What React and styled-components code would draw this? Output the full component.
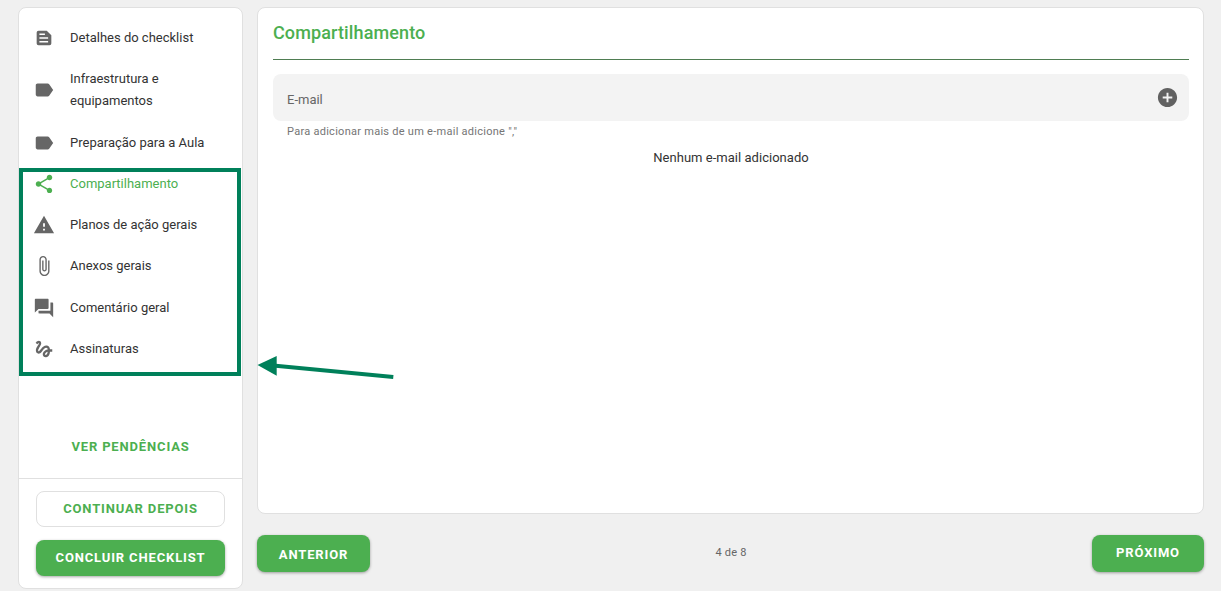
import React from 'react';
import styled, { createGlobalStyle } from 'styled-components';

const GREEN = '#4caf50';
const MARK = '#00805a';

const paths = {
    description: 'M6 4h9l5 5v9a2 2 0 0 1-2 2H6a2 2 0 0 1-2-2V6a2 2 0 0 1 2-2zM7 7.2v1.6h6V7.2zM7 11.2v1.6h9.5v-1.6zM7 15.2v1.6h9.5v-1.6z',
    label: 'M17.63 5.84C17.27 5.33 16.67 5 16 5L5 5.01C3.9 5.01 3 5.9 3 7v10c0 1.1.9 1.99 2 1.99L16 19c.67 0 1.27-.33 1.63-.84L22 12l-4.37-6.16z',
    share: 'M18 16.08c-.76 0-1.44.3-1.96.77L8.91 12.7c.05-.23.09-.46.09-.7s-.04-.47-.09-.7l7.05-4.11c.54.5 1.25.81 2.04.81 1.66 0 3-1.34 3-3s-1.34-3-3-3-3 1.34-3 3c0 .24.04.47.09.7L8.04 9.81C7.5 9.31 6.79 9 6 9c-1.66 0-3 1.34-3 3s1.34 3 3 3c.79 0 1.5-.31 2.04-.81l7.12 4.16c-.05.21-.08.43-.08.65 0 1.61 1.31 2.92 2.92 2.92s2.92-1.31 2.92-2.92-1.31-2.92-2.92-2.92z',
    warning: 'M1 21h22L12 2 1 21zm12-3h-2v-2h2v2zm0-4h-2v-4h2v4z',
    attach: 'M16.5 6v11.5c0 2.21-1.79 4-4 4s-4-1.79-4-4V5c0-1.38 1.12-2.5 2.5-2.5s2.5 1.12 2.5 2.5v10.5c0 .55-.45 1-1 1s-1-.45-1-1V6H10v9.5c0 1.38 1.12 2.5 2.5 2.5s2.5-1.12 2.5-2.5V5c0-2.21-1.79-4-4-4S7 2.79 7 5v12.5c0 3.04 2.46 5.5 5.5 5.5s5.5-2.46 5.5-5.5V6h-1.5z',
    forum: 'M21 6h-2v9H6v2c0 .55.45 1 1 1h11l4 4V7c0-.55-.45-1-1-1zm-4 6V3c0-.55-.45-1-1-1H3c-.55 0-1 .45-1 1v14l4-4h10c.55 0 1-.45 1-1z',
    gesture: 'M4.59 6.89c.7-.71 1.4-1.35 1.71-1.22.5.2 0 1.03-.3 1.52-.25.42-2.86 3.89-2.86 6.31 0 1.28.48 2.34 1.34 2.98.75.56 1.74.73 2.64.46 1.07-.31 1.95-1.4 3.06-2.77 1.21-1.49 2.83-3.44 4.08-3.44 1.63 0 1.65 1.01 1.76 1.79-3.78.64-5.38 3.67-5.38 5.37 0 1.7 1.44 3.09 3.21 3.09 1.63 0 4.29-1.33 4.69-6.1H21v-2.5h-2.47c-.15-1.65-1.09-4.2-4.03-4.2-2.25 0-4.18 1.91-4.94 2.84-.58.73-2.06 2.48-2.29 2.72-.25.3-.68.84-1.11.84-.45 0-.72-.83-.36-1.92.35-1.09 1.4-2.86 1.85-3.52.78-1.14 1.3-1.92 1.3-3.28C8.95 3.69 7.31 3 6.44 3 5.12 3 3.97 4 3.72 4.25c-.36.36-.66.66-.88.93l1.75 1.71zm9.29 11.66c-.31 0-.74-.26-.74-.72 0-.6.73-2.2 2.87-2.76-.3 2.69-1.43 3.48-2.13 3.48z',
    add: 'M12 2C6.48 2 2 6.48 2 12s4.48 10 10 10 10-4.48 10-10S17.52 2 12 2zm5 11h-4v4h-2v-4H7v-2h4V7h2v4h4v2z',
};

const steps = [
    { icon: 'description', text: 'Detalhes do checklist', size: 24 },
    { icon: 'label', text: 'Infraestrutura e equipamentos' },
    { icon: 'label', text: 'Preparação para a Aula' },
    { icon: 'share', text: 'Compartilhamento', active: true },
    { icon: 'warning', text: 'Planos de ação gerais' },
    { icon: 'attach', text: 'Anexos gerais' },
    { icon: 'forum', text: 'Comentário geral' },
    { icon: 'gesture', text: 'Assinaturas' },
];

function Icon({ name, size = 22, className }) {
    return (
        <svg className={className} width={size} height={size} viewBox="0 0 24 24" fill="currentColor" fillRule="evenodd">
            <path d={paths[name]} />
        </svg>
    );
}

function App() {
    return (
        <Page>
            <GlobalStyle />
            <Sidebar>
                <StepList>
                    {steps.map((step) => (
                        <StepRow key={step.text} $active={step.active}>
                            <IconSlot>
                                <Icon name={step.icon} size={step.size} />
                            </IconSlot>
                            <StepText>{step.text}</StepText>
                        </StepRow>
                    ))}
                </StepList>
                <PendingLink>Ver pendências</PendingLink>
                <SidebarFooter>
                    <OutlineButton>Continuar depois</OutlineButton>
                    <SolidButton>Concluir checklist</SolidButton>
                </SidebarFooter>
            </Sidebar>
            <Content>
                <Card>
                    <Title>Compartilhamento</Title>
                    <EmailField>
                        <EmailLabel>E-mail</EmailLabel>
                        <AddIcon name="add" size={23} />
                    </EmailField>
                    <Hint>Para adicionar mais de um e-mail adicione ","</Hint>
                    <EmptyText>Nenhum e-mail adicionado</EmptyText>
                </Card>
                <Pager>
                    <PagerButton>Anterior</PagerButton>
                    <PageCount>4 de 8</PageCount>
                    <PagerButton>Próximo</PagerButton>
                </Pager>
            </Content>
            <MarkBox />
            <MarkArrow width="140" height="30" viewBox="0 0 140 30">
                <line x1="136.3" y1="24" x2="16" y2="12.5" stroke={MARK} strokeWidth="4" />
                <polygon points="0.5,12 19.7,3 19.7,22.7" fill={MARK} />
            </MarkArrow>
        </Page>
    );
}

const GlobalStyle = createGlobalStyle`
    html, body {
        margin: 0;
        padding: 0;
        background: #f0f0f0;
    }
    body {
        font-family: Roboto, "Liberation Sans", sans-serif;
    }
`;

const Page = styled.div`
    position: relative;
    box-sizing: border-box;
    width: 1221px;
    height: 591px;
    padding: 7px 17px 2px 18px;
    display: grid;
    grid-template-columns: 225px 947px;
    column-gap: 14px;
    overflow: hidden;
`;

const Sidebar = styled.aside`
    display: flex;
    flex-direction: column;
    box-sizing: border-box;
    background: #fff;
    border: 1px solid #e0e0e0;
    border-radius: 8px;
`;

const StepList = styled.ul`
    list-style: none;
    margin: 0;
    padding: 9.35px 0 0 14px;
    flex: 1;
`;

const StepRow = styled.li`
    display: flex;
    align-items: center;
    gap: 15px;
    padding: 9.65px 30px 9.65px 0;
    font-size: 13px;
    line-height: 22px;
    color: ${(p) => (p.$active ? GREEN : '#333')};
    svg {
        color: ${(p) => (p.$active ? GREEN : '#666')};
    }
`;

// keeps the row height from the text, icons of any size centre on it
const IconSlot = styled.span`
    flex: none;
    width: 22px;
    height: 20px;
    display: flex;
    align-items: center;
    justify-content: center;
`;

const StepText = styled.span`
    display: block;
`;

const PendingLink = styled.div`
    text-align: center;
    font-size: 13px;
    font-weight: 700;
    letter-spacing: 0.85px;
    line-height: 16px;
    color: ${GREEN};
    text-transform: uppercase;
    padding-bottom: 23px;
`;

const SidebarFooter = styled.div`
    display: flex;
    flex-direction: column;
    gap: 13px;
    padding: 12px 17px;
    border-top: 1px solid #e0e0e0;
`;

const ButtonBase = styled.button`
    display: block;
    box-sizing: border-box;
    width: 100%;
    height: 36px;
    padding: 0 0 2px;
    border-radius: 8px;
    font-family: inherit;
    font-size: 13px;
    font-weight: 700;
    letter-spacing: 0.85px;
    text-transform: uppercase;
`;

const OutlineButton = styled(ButtonBase)`
    background: #fff;
    color: ${GREEN};
    border: 1px solid #e0e0e0;
`;

const SolidButton = styled(ButtonBase)`
    background: ${GREEN};
    color: #fff;
    border: none;
    box-shadow: 0 1px 3px rgba(0, 0, 0, 0.35);
`;

const Content = styled.main`
    display: flex;
    flex-direction: column;
`;

const Card = styled.section`
    box-sizing: border-box;
    height: 507px;
    padding: 0 14px 0 15px;
    background: #fff;
    border: 1px solid #e0e0e0;
    border-radius: 8px;
`;

const Title = styled.h1`
    margin: 0 0 14px;
    height: 52px;
    box-sizing: border-box;
    padding-top: 14px;
    font-size: 18px;
    line-height: 22px;
    font-weight: 500;
    letter-spacing: 0.12px;
    color: ${GREEN};
    border-bottom: 1px solid #4f7d52;
`;

const EmailField = styled.div`
    display: flex;
    align-items: center;
    justify-content: space-between;
    height: 47px;
    padding: 0 10px 0 14px;
    background: #f3f3f3;
    border-radius: 8px;
`;

const EmailLabel = styled.span`
    padding-top: 4px;
    font-size: 13px;
    color: #666;
`;

const AddIcon = styled(Icon)`
    color: #616161;
`;

const Hint = styled.div`
    margin: 4px 0 0 14px;
    font-size: 11px;
    line-height: 14px;
    letter-spacing: 0.27px;
    color: #757575;
`;

const EmptyText = styled.div`
    margin-top: 11px;
    text-align: center;
    font-size: 13px;
    line-height: 16px;
    letter-spacing: 0.03px;
    color: #333;
`;

const Pager = styled.div`
    display: flex;
    align-items: center;
    justify-content: space-between;
    margin-top: 21px;
`;

const PagerButton = styled(SolidButton)`
    width: 113px;
    height: 37px;
    padding: 2px 0 0;

    &:last-child {
        width: 112px;
        padding: 0 0 2px;
    }
`;

const PageCount = styled.span`
    margin-top: -2px;
    font-size: 11px;
    letter-spacing: 0.2px;
    color: #666;
`;

const MarkBox = styled.div`
    position: absolute;
    left: 19px;
    top: 168px;
    width: 222px;
    height: 208px;
    box-sizing: border-box;
    border: 4px solid ${MARK};
    pointer-events: none;
`;

const MarkArrow = styled.svg`
    position: absolute;
    left: 257px;
    top: 353px;
`;

export default App;
